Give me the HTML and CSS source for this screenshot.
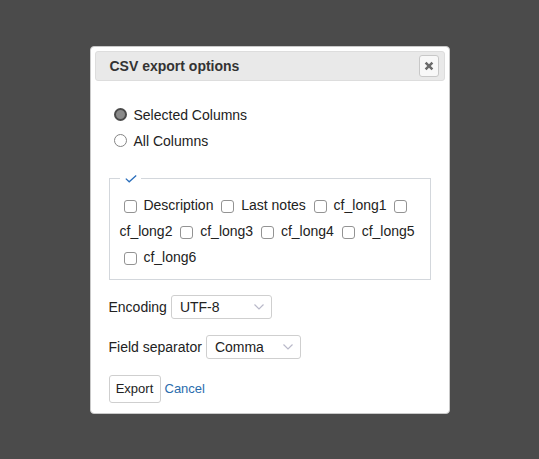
FILE: index.html
```html
<!DOCTYPE html>
<html lang="en">
<head>
<meta charset="utf-8">
<title>CSV export options</title>
<link rel="stylesheet" href="styles.css">
</head>
<body>
<div class="dialog">
  <div class="titlebar">
    <span class="title">CSV export options</span>
    <button class="close" type="button" title="Close">
      <svg width="10" height="10" viewBox="0 0 10 10"><path d="M1.6 1.6 L8.4 8.4 M8.4 1.6 L1.6 8.4" stroke="#6b6b6b" stroke-width="2.5" stroke-linecap="butt" fill="none"/></svg>
    </button>
  </div>
  <div class="content">
    <div class="choices">
      <label class="choice"><input type="radio" name="cols" class="radio" checked>Selected Columns</label>
      <label class="choice"><input type="radio" name="cols" class="radio">All Columns</label>
    </div>
    <fieldset class="columns">
      <legend class="legend"><svg width="12" height="8" viewBox="0 0 12 8"><path d="M0.8 3.6 L4.2 6.8 L11.2 0.6" stroke="#2a6ebb" stroke-width="1.3" fill="none"/></svg></legend>
      <input type="checkbox" class="cb" id="c1"> <label for="c1">Description</label>
      <input type="checkbox" class="cb" id="c2"> <label for="c2">Last notes</label>
      <input type="checkbox" class="cb" id="c3"> <label for="c3">cf_long1</label>
      <input type="checkbox" class="cb" id="c4"> <label for="c4">cf_long2</label>
      <input type="checkbox" class="cb" id="c5"> <label for="c5">cf_long3</label>
      <input type="checkbox" class="cb" id="c6"> <label for="c6">cf_long4</label>
      <input type="checkbox" class="cb" id="c7"> <label for="c7">cf_long5</label>
      <input type="checkbox" class="cb" id="c8"> <label for="c8">cf_long6</label>
    </fieldset>
    <div class="field">
      <label for="enc">Encoding</label>
      <span class="select-wrap">
        <select id="enc" class="select select-enc"><option>UTF-8</option></select>
        <svg class="chev" width="10" height="6" viewBox="0 0 10 6"><path d="M0.5 0.5 L5 5 L9.5 0.5" stroke="#b9b9c9" stroke-width="1.2" fill="none"/></svg>
      </span>
    </div>
    <div class="field">
      <label for="sep">Field separator</label>
      <span class="select-wrap">
        <select id="sep" class="select select-sep"><option>Comma</option></select>
        <svg class="chev" width="10" height="6" viewBox="0 0 10 6"><path d="M0.5 0.5 L5 5 L9.5 0.5" stroke="#b9b9c9" stroke-width="1.2" fill="none"/></svg>
      </span>
    </div>
    <div class="actions">
      <button type="button" class="btn">Export</button>
      <a href="#" class="link">Cancel</a>
    </div>
  </div>
</div>
</body>
</html>
```
FILE: styles.css
```css
html, body {
  margin: 0;
  padding: 0;
}
body {
  background: #4b4b4b;
  font-family: "Liberation Sans", Arial, sans-serif;
  font-size: 14px;
  color: #222;
  min-height: 100vh;
  display: flex;
  align-items: center;
  justify-content: center;
}
.dialog {
  width: 360px;
  box-sizing: border-box;
  background: #fff;
  border: 1px solid #c9c9c9;
  border-radius: 4px;
  padding: 4px;
}
.titlebar {
  height: 30px;
  box-sizing: border-box;
  background: #e9e9e9;
  border: 1px solid #dddddd;
  border-radius: 3px;
  display: flex;
  align-items: center;
  justify-content: space-between;
  padding: 0 5px 0 14px;
}
.title {
  font-weight: bold;
  font-size: 14px;
  color: #333;
}
.close {
  width: 20px;
  height: 22px;
  box-sizing: border-box;
  margin: 0;
  padding: 0;
  background: #f8f8f8;
  border: 1px solid #c8c8c8;
  border-radius: 3px;
  display: flex;
  align-items: center;
  justify-content: center;
}
.close svg {
  display: block;
}
.content {
  padding: 21px 14px 6px 14px;
}
.choices {
  display: flex;
  flex-direction: column;
}
.choice {
  height: 26px;
  display: flex;
  align-items: center;
}
.radio {
  appearance: none;
  -webkit-appearance: none;
  width: 13px;
  height: 13px;
  box-sizing: border-box;
  margin: 0 7px 0 5px;
  border: 1px solid #858585;
  border-radius: 50%;
  background: #fff;
}
.radio:checked {
  border: 2px solid #4a4a4a;
  background: #8a8a8a;
}
.columns {
  margin: 18px 0 0 0;
  padding: 6px 10px 9px 10px;
  border: 1px solid #d3d7dc;
  line-height: 26px;
  min-width: 0;
}
.legend {
  padding: 0 4px 0 5px;
  height: 14px;
  line-height: 14px;
  display: flex;
  align-items: center;
}
.legend svg {
  display: block;
}
.cb {
  appearance: none;
  -webkit-appearance: none;
  width: 13px;
  height: 13px;
  box-sizing: border-box;
  margin: 0 3px 0 4px;
  border: 1px solid #939393;
  border-radius: 3px;
  background: #fff;
  vertical-align: -3px;
}
.field {
  margin-top: 15px;
  height: 24px;
  display: flex;
  align-items: center;
  gap: 4px;
}
.field + .field {
  margin-top: 16px;
}
.select-wrap {
  position: relative;
  display: inline-block;
  height: 24px;
}
.select {
  appearance: none;
  -webkit-appearance: none;
  height: 24px;
  box-sizing: border-box;
  margin: 0;
  padding: 0 0 0 8px;
  border: 1px solid #cfcfcf;
  border-radius: 3px;
  background: #fff;
  font-family: inherit;
  font-size: 14px;
  color: #222;
}
.select-enc {
  width: 101px;
}
.select-sep {
  width: 95px;
}
.chev {
  position: absolute;
  right: 8px;
  top: 9px;
  pointer-events: none;
}
.actions {
  margin-top: 16px;
  display: flex;
  align-items: center;
  gap: 4px;
}
.btn {
  height: 28px;
  box-sizing: border-box;
  margin: 0;
  padding: 0 6px;
  width: 52px;
  background: #fff;
  border: 1px solid #cfcfcf;
  border-radius: 3px;
  font-family: inherit;
  font-size: 13px;
  color: #222;
}
.link {
  font-size: 13px;
  color: #2a6cad;
  text-decoration: none;
}
```
